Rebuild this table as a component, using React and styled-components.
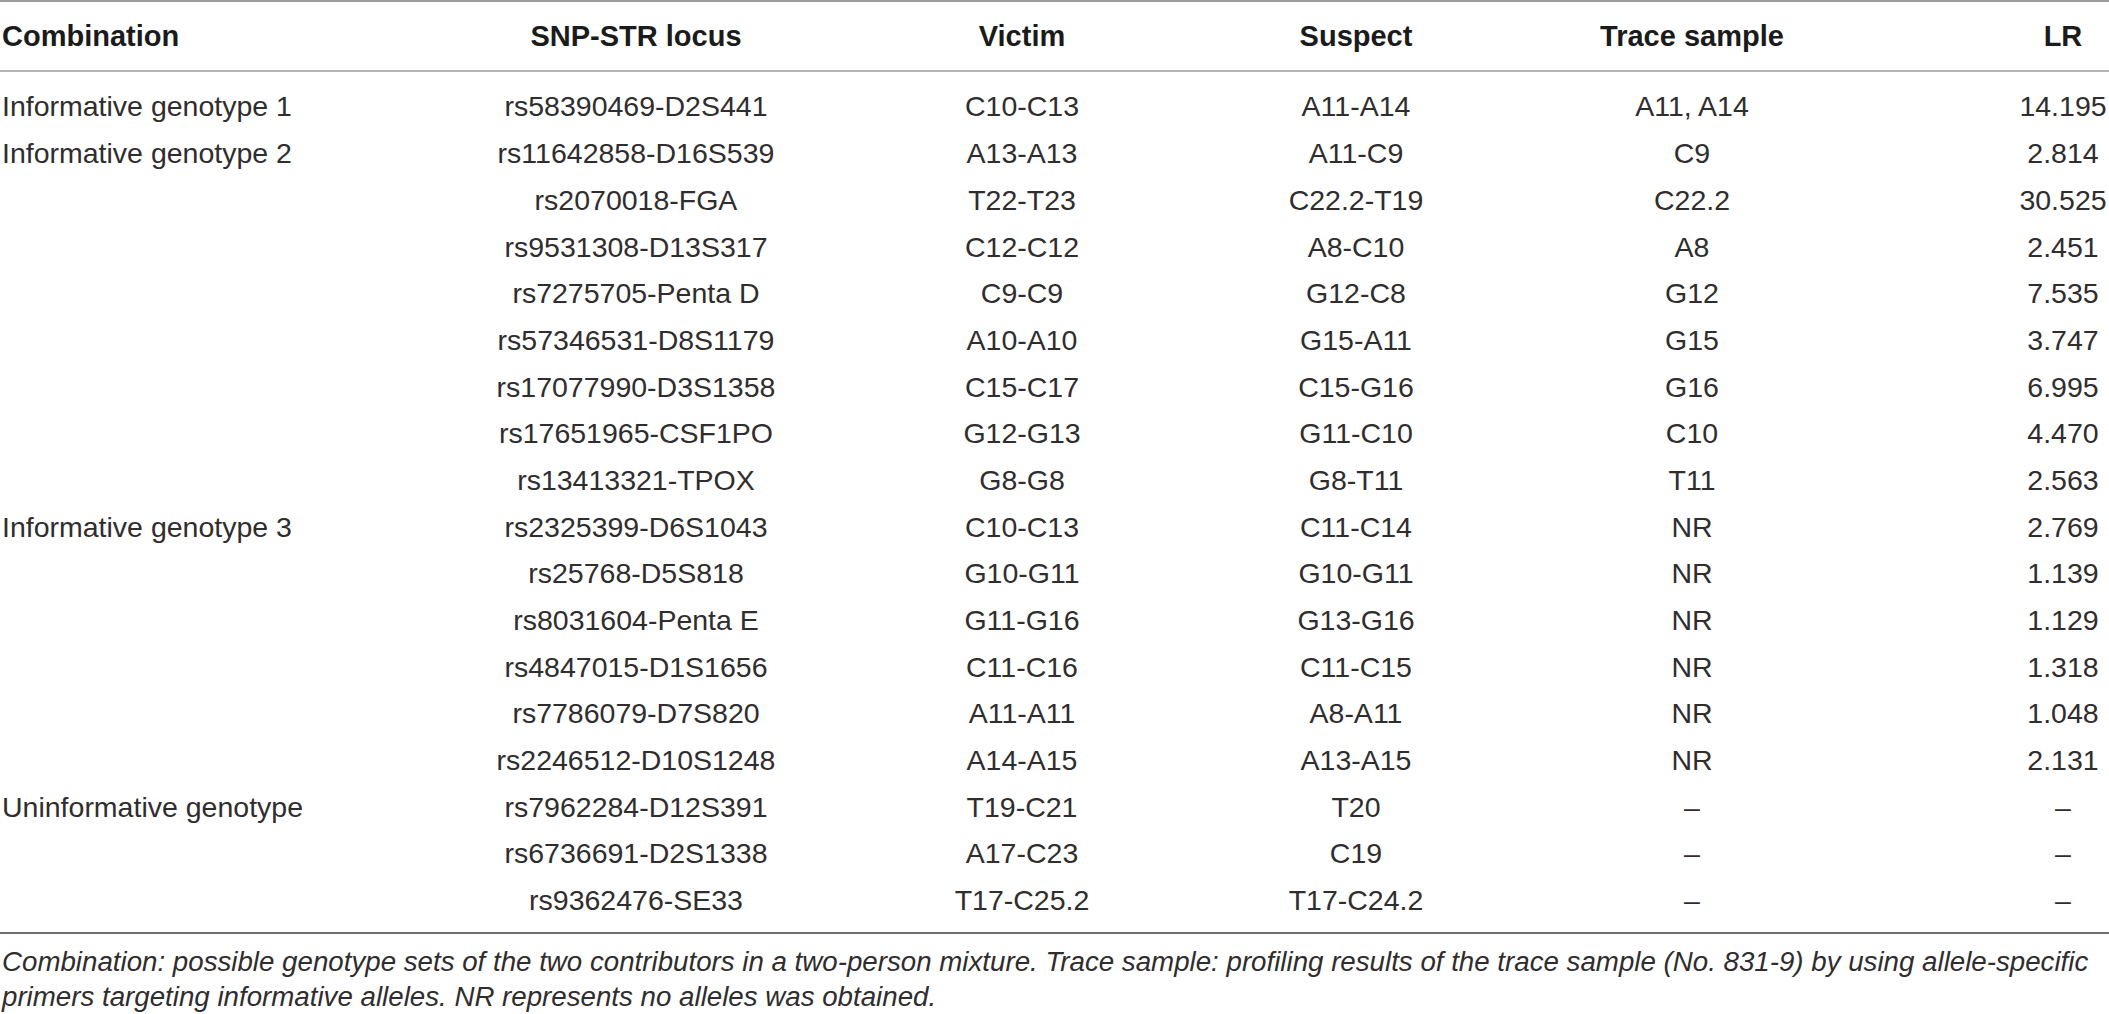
import styled, { createGlobalStyle } from 'styled-components'

const GlobalStyle = createGlobalStyle`
    html, body {
        margin: 0;
        padding: 0;
        background: #ffffff;
        overflow: hidden;
    }
    body {
        font-family: "Liberation Sans", Arial, sans-serif;
        color: #231f20;
    }
`

const rows = [
    ['Informative genotype 1', 'rs58390469-D2S441', 'C10-C13', 'A11-A14', 'A11, A14', '14.195'],
    ['Informative genotype 2', 'rs11642858-D16S539', 'A13-A13', 'A11-C9', 'C9', '2.814'],
    ['', 'rs2070018-FGA', 'T22-T23', 'C22.2-T19', 'C22.2', '30.525'],
    ['', 'rs9531308-D13S317', 'C12-C12', 'A8-C10', 'A8', '2.451'],
    ['', 'rs7275705-Penta D', 'C9-C9', 'G12-C8', 'G12', '7.535'],
    ['', 'rs57346531-D8S1179', 'A10-A10', 'G15-A11', 'G15', '3.747'],
    ['', 'rs17077990-D3S1358', 'C15-C17', 'C15-G16', 'G16', '6.995'],
    ['', 'rs17651965-CSF1PO', 'G12-G13', 'G11-C10', 'C10', '4.470'],
    ['', 'rs13413321-TPOX', 'G8-G8', 'G8-T11', 'T11', '2.563'],
    ['Informative genotype 3', 'rs2325399-D6S1043', 'C10-C13', 'C11-C14', 'NR', '2.769'],
    ['', 'rs25768-D5S818', 'G10-G11', 'G10-G11', 'NR', '1.139'],
    ['', 'rs8031604-Penta E', 'G11-G16', 'G13-G16', 'NR', '1.129'],
    ['', 'rs4847015-D1S1656', 'C11-C16', 'C11-C15', 'NR', '1.318'],
    ['', 'rs7786079-D7S820', 'A11-A11', 'A8-A11', 'NR', '1.048'],
    ['', 'rs2246512-D10S1248', 'A14-A15', 'A13-A15', 'NR', '2.131'],
    ['Uninformative genotype', 'rs7962284-D12S391', 'T19-C21', 'T20', '\u2013', '\u2013'],
    ['', 'rs6736691-D2S1338', 'A17-C23', 'C19', '\u2013', '\u2013'],
    ['', 'rs9362476-SE33', 'T17-C25.2', 'T17-C24.2', '\u2013', '\u2013'],
]

const headings = ['Combination', 'SNP-STR locus', 'Victim', 'Suspect', 'Trace sample', 'LR']

const Page = styled.div`
    width: 2109px;
`

const Table = styled.div`
    border-top: 2px solid #9c9c9c;
    border-bottom: 2px solid #6f6f6f;
    padding-bottom: 8px;
`

const Row = styled.div`
    display: grid;
    grid-template-columns: 470px 332px 440px 228px 444px 1fr;
    align-items: center;
    height: ${props => props.$head ? '68px' : '46.7px'};
    border-bottom: ${props => props.$head ? '2px solid #b4b4b4' : 'none'};
    margin-bottom: ${props => props.$head ? '11.6px' : '0'};
`

const Cell = styled.div`
    white-space: nowrap;
    font-size: ${props => props.$head ? '29px' : '28.5px'};
    font-weight: ${props => props.$head ? 700 : 400};
    color: ${props => props.$head ? '#1b1b1b' : '#302d2e'};
    text-align: ${props => props.$first ? 'left' : 'center'};
    padding-left: ${props => props.$first ? '2px' : props.$last ? '103px' : '0'};
`

const Caption = styled.p`
    margin: 10px 0 0 0;
    padding-left: 2px;
    font-size: 27.7px;
    line-height: 35px;
    font-style: italic;
    color: #302d2e;
    white-space: nowrap;
`

function TableRow({ cells, head }) {
    return (
        <Row $head={head}>
            {cells.map((text, i) => (
                <Cell key={i} $head={head} $first={i === 0} $last={i === cells.length - 1}>
                    {text}
                </Cell>
            ))}
        </Row>
    )
}

export default function App() {
    return (
        <Page>
            <GlobalStyle />
            <Table>
                <TableRow cells={headings} head />
                {rows.map((r, i) => (
                    <TableRow key={i} cells={r} />
                ))}
            </Table>
            <Caption>
                Combination: possible genotype sets of the two contributors in a two-person mixture. Trace sample: profiling results of the trace sample (No. 831-9) by using allele-specific
                <br />
                primers targeting informative alleles. NR represents no alleles was obtained.
            </Caption>
        </Page>
    )
}
